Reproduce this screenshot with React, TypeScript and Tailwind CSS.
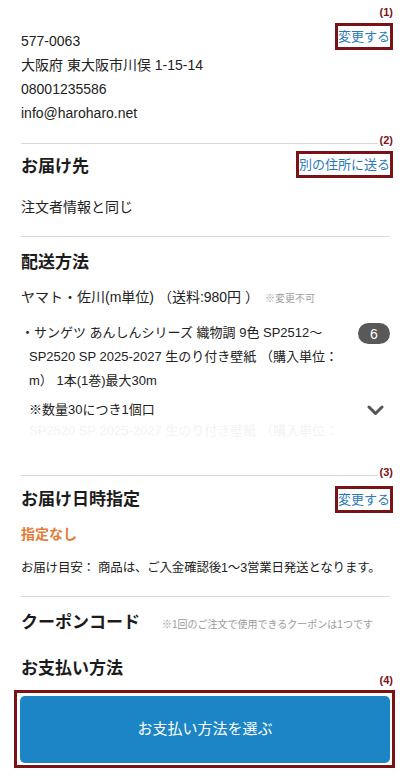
import type { ReactNode } from "react";

const RED = "border-[#7a1315]";

interface FlagProps {
  label: string;
  gap?: "sm" | "lg";
  className?: string;
  children: ReactNode;
}

// Link framed by an annotation box with a small numbered tag above it
function Flag({ label, gap = "sm", className = "", children }: FlagProps) {
  return (
    <div
      className={`relative -mr-[3px] flex h-[27px] shrink-0 items-center border-[3px] ${RED} text-[13px] leading-none text-[#2b7ab7] ${className}`}
    >
      <span
        className={`absolute -right-[3px] bottom-full bg-white pl-[2px] text-[11px] font-bold leading-[13px] text-[#7a1315] ${
          gap === "lg" ? "mb-[10px]" : "mb-[7px]"
        }`}
      >
        {label}
      </span>
      {children}
    </div>
  );
}

function Divider({ className = "" }: { className?: string }) {
  return <div className={`h-px bg-[#dadada] ${className}`} />;
}

function Heading({ children, className = "" }: { children: ReactNode; className?: string }) {
  return (
    <h2 className={`text-[17px] font-bold leading-[24px] text-[#1c1c1c] ${className}`}>
      {children}
    </h2>
  );
}

export default function App() {
  return (
    <div className="min-h-screen w-full bg-white pl-[21px] pr-[16px] font-['Liberation_Sans','Noto_Sans_CJK_JP',sans-serif] text-[#222]">
      {/* 注文者情報 */}
      <div className="flex items-start justify-between">
        <div className="pt-[29px] text-[14px] leading-[24px]">
          <p>577-0063</p>
          <p>大阪府 東大阪市川俣 1-15-14</p>
          <p>08001235586</p>
          <p>info@haroharo.net</p>
        </div>
        <Flag label="(1)" className="mt-[23px]">
          変更する
        </Flag>
      </div>

      <Divider className="mt-[18px]" />

      {/* お届け先 */}
      <div className="mt-[7px] flex items-start justify-between">
        <Heading className="mt-[4px]">お届け先</Heading>
        <Flag label="(2)">別の住所に送る</Flag>
      </div>
      <p className="mt-[16px] text-[14px] leading-[24px]">注文者情報と同じ</p>

      <Divider className="mt-[17px]" />

      {/* 配送方法 */}
      <Heading className="mt-[14px]">配送方法</Heading>
      <p className="mt-[10px] flex items-baseline text-[14px] leading-[24px]">
        <span>ヤマト・佐川(m単位) （送料:980円 ）</span>
        <span className="ml-[6px] text-[10px] text-[#a0a0a0]">※変更不可</span>
      </p>

      <div className="mt-[10px] flex items-start justify-between">
        <div className="text-[13px] leading-[24px]">
          <p>・サンゲツ あんしんシリーズ 織物調 9色 SP2512〜</p>
          <p className="pl-[8px]">SP2520 SP 2025-2027 生のり付き壁紙 （購入単位：</p>
          <p className="pl-[8px]">m） 1本(1巻)最大30m</p>
        </div>
        <span className="mt-[2px] flex h-[21px] w-[32px] shrink-0 items-center justify-center rounded-full bg-[#595959] text-[14px] leading-none text-white">
          6
        </span>
      </div>
      <div className="mt-[5px] flex items-center justify-between pl-[8px] text-[13px] leading-[24px]">
        <p>※数量30につき1個口</p>
        <svg width="17" height="11" viewBox="0 0 17 11" className="mr-[6px]">
          <polyline
            points="2,2 8.5,8.5 15,2"
            fill="none"
            stroke="#555"
            strokeWidth="3"
            strokeLinecap="round"
            strokeLinejoin="round"
          />
        </svg>
      </div>
      {/* faded preview of the next line */}
      <p className="pl-[8px] text-[13px] leading-[18px] text-[#f3f3f3]">
        SP2520 SP 2025-2027 生のり付き壁紙 （購入単位：
      </p>

      <Divider className="mt-[35px]" />

      {/* お届け日時指定 */}
      <div className="mt-[10px] flex items-start justify-between">
        <Heading className="mt-[2px]">お届け日時指定</Heading>
        <Flag label="(3)" gap="lg">
          変更する
        </Flag>
      </div>
      <p className="mt-[9px] text-[14px] font-bold leading-[24px] text-[#e27c38]">指定なし</p>
      <p className="mt-[10px] text-[12.5px] leading-[24px] tracking-[-0.2px]">
        お届け目安： 商品は、ご入金確認後1〜3営業日発送となります。
      </p>

      <Divider className="mt-[16px]" />

      {/* クーポンコード */}
      <div className="mt-[14px] flex items-baseline gap-[22px]">
        <Heading>クーポンコード</Heading>
        <span className="text-[10px] text-[#9a9a9a]">
          ※1回のご注文で使用できるクーポンは1つです
        </span>
      </div>

      {/* お支払い方法 */}
      <Heading className="mt-[22px]">お支払い方法</Heading>
      <div
        className={`relative -ml-[7px] -mr-[5px] mt-[9px] border-[3px] ${RED} p-[3px] pr-[2px] pb-[2px]`}
      >
        <span className="absolute -right-[1px] bottom-full mb-[6px] bg-white pl-[2px] text-[11px] font-bold leading-[13px] text-[#7a1315]">
          (4)
        </span>
        <button className="flex h-[67px] w-full items-center justify-center rounded-[5px] bg-[#1b85c6] text-[15px] text-white">
          お支払い方法を選ぶ
        </button>
      </div>
    </div>
  );
}
